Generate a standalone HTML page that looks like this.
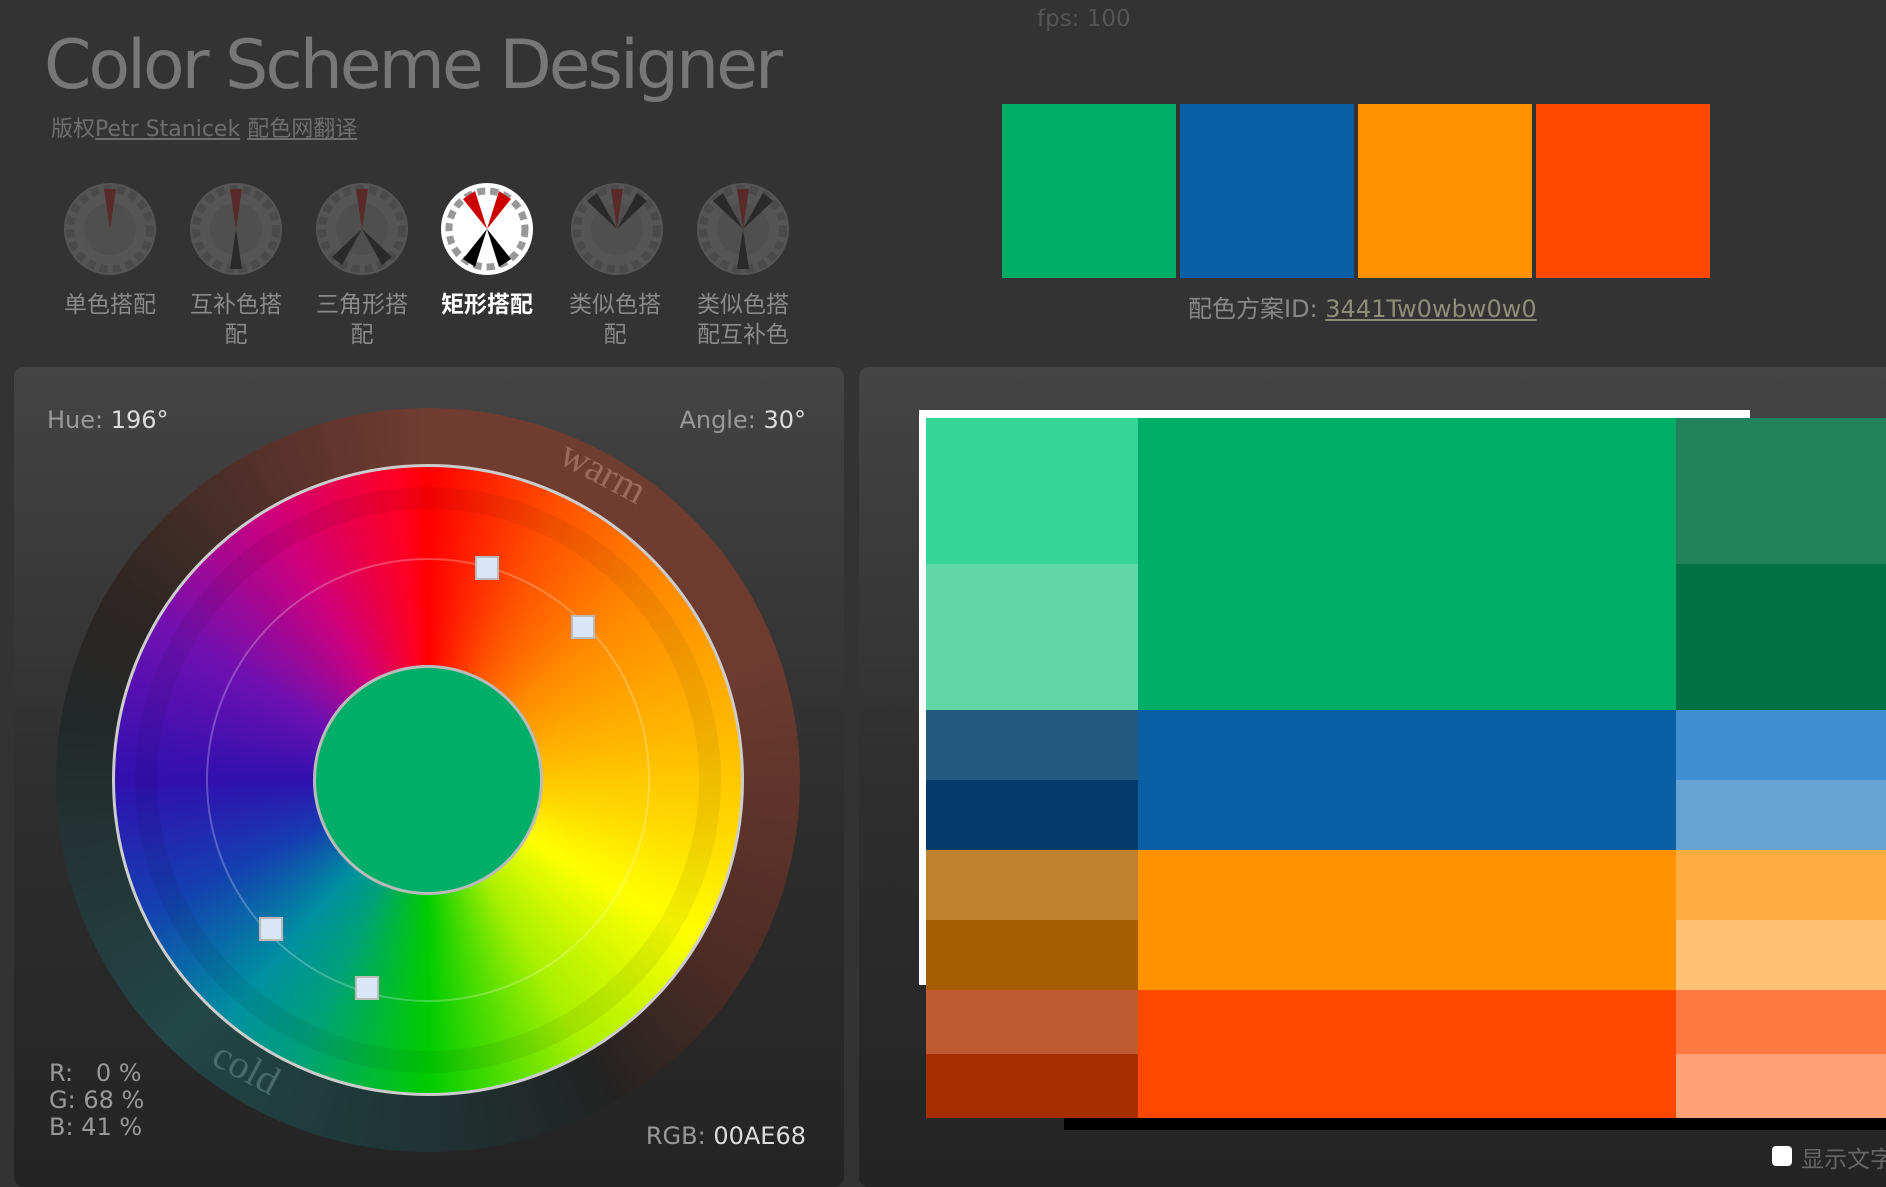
<!DOCTYPE html>
<html><head><meta charset="utf-8"><style>
*{margin:0;padding:0;box-sizing:border-box}
body{width:1886px;height:1172px;background:#333;overflow:hidden;position:relative;font-family:"DejaVu Sans","Noto Sans CJK SC",sans-serif;color:#888}
.a{position:absolute}
.title{left:44px;top:26px;font-family:"DejaVu Sans",sans-serif;font-size:68px;color:#777;letter-spacing:-3px;white-space:nowrap}
.sub{left:51px;top:111px;font-size:22px;color:#6e6e6e;white-space:nowrap}
.sub u{text-decoration:underline}
.lab{font-size:23px;color:#8a8a8a;text-align:center;width:120px;line-height:30px;font-family:"Noto Sans CJK SC",sans-serif}
.sw{top:104px;height:174px;width:174px}
.panel{top:367px;height:820px;border-radius:10px;background:linear-gradient(#444,#2d2d2d 55%,#242424)}
.c{position:absolute}
</style></head><body>
<div class="a title">Color Scheme Designer</div>
<div class="a sub">版权<u>Petr Stanicek</u> <u>配色网翻译</u></div>
<div class="a" style="left:1037px;top:6px;font-size:23px;color:#555">fps: 100</div>

<svg class="a" style="left:0;top:170px" width="820" height="120">
<defs>
<g id="ic"><circle r="46" fill="#555"/><circle r="40" fill="none" stroke="#4a4a4a" stroke-width="8" stroke-dasharray="8 5"/><circle r="26" fill="#4f4f4f"/></g>
</defs>
<g transform="translate(110,59)"><use href="#ic"/><path d="M0 0 L-6 -40 L6 -40Z" fill="#5a2a2a"/></g>
<g transform="translate(236,59)"><use href="#ic"/><path d="M0 0 L-6 -40 L6 -40Z" fill="#5a2a2a"/><path d="M0 0 L-6 40 L6 40Z" fill="#2a2a2a"/></g>
<g transform="translate(362,59)"><use href="#ic"/><path d="M0 0 L-6 -40 L6 -40Z" fill="#5a2a2a"/><path d="M0 0 L-30 28 L-20 36Z" fill="#2a2a2a"/><path d="M0 0 L30 28 L20 36Z" fill="#2a2a2a"/></g>
<g transform="translate(487,59)"><circle r="46" fill="#fff"/><circle r="38" fill="none" stroke="#999" stroke-width="7" stroke-dasharray="8 5"/><path d="M0 0 L-24 -30 L-12 -38Z" fill="#c00"/><path d="M0 0 L24 -30 L12 -38Z" fill="#c00"/><path d="M0 0 L-24 30 L-12 38Z" fill="#000"/><path d="M0 0 L24 30 L12 38Z" fill="#000"/></g>
<g transform="translate(617,59)"><use href="#ic"/><path d="M0 0 L-6 -40 L6 -40Z" fill="#5a2a2a"/><path d="M0 0 L-30 -28 L-20 -36Z" fill="#2a2a2a"/><path d="M0 0 L30 -28 L20 -36Z" fill="#2a2a2a"/></g>
<g transform="translate(743,59)"><use href="#ic"/><path d="M0 0 L-6 -40 L6 -40Z" fill="#5a2a2a"/><path d="M0 0 L-30 -28 L-20 -36Z" fill="#2a2a2a"/><path d="M0 0 L30 -28 L20 -36Z" fill="#2a2a2a"/><path d="M0 0 L-6 40 L6 40Z" fill="#2a2a2a"/></g>
</svg>
<div class="a lab" style="left:50px;top:287px">单色搭配</div>
<div class="a lab" style="left:176px;top:287px">互补色搭<br>配</div>
<div class="a lab" style="left:302px;top:287px">三角形搭<br>配</div>
<div class="a lab" style="left:427px;top:287px;color:#fff;font-weight:bold">矩形搭配</div>
<div class="a lab" style="left:555px;top:287px">类似色搭<br>配</div>
<div class="a lab" style="left:683px;top:287px">类似色搭<br>配互补色</div>

<div class="a sw" style="left:1002px;background:#00AE68"></div>
<div class="a sw" style="left:1180px;background:#0B5FA5"></div>
<div class="a sw" style="left:1358px;background:#FF9200"></div>
<div class="a sw" style="left:1536px;background:#FF4900"></div>
<div class="a" style="left:1188px;top:289px;font-size:24px;color:#888;white-space:nowrap">配色方案ID: <u style="color:#8d8d78">3441Tw0wbw0w0</u></div>

<div class="a panel" style="left:14px;width:830px"></div>
<div class="a" style="left:47px;top:406px;font-size:24px;color:#999">Hue: <span style="color:#ddd">196°</span></div>
<div class="a" style="right:1080px;top:406px;font-size:24px;color:#999;white-space:nowrap">Angle: <span style="color:#ddd">30°</span></div>
<div class="c" style="left:56px;top:408px;width:744px;height:744px;border-radius:50%;background:conic-gradient(#703c30 0deg,#6e3b2f 70deg,#4a2b24 125deg,#232323 150deg,#1f3a3a 195deg,#234646 225deg,#232828 280deg,#2c2624 300deg,#52302a 330deg,#703c30 360deg)"></div>
<div class="c" style="left:112px;top:464px;width:632px;height:632px;border-radius:50%;border:3px solid #ccc;background:conic-gradient(#ff0000 0deg,#ff5000 25deg,#ff8a00 50deg,#ffb000 75deg,#ffd800 100deg,#ffff00 120deg,#a8f000 150deg,#00cc00 180deg,#00a07a 205deg,#0090a0 220deg,#1440b0 245deg,#3010b0 270deg,#7010b0 300deg,#d0007a 330deg,#ff0020 355deg,#ff0000 360deg)"></div>
<div class="c" style="left:135px;top:487px;width:586px;height:586px;border-radius:50%;border:22px solid rgba(0,0,0,.06)"></div>
<div class="c" style="left:206px;top:558px;width:444px;height:444px;border-radius:50%;border:2px solid rgba(255,255,255,.25)"></div>
<div class="c" style="left:313px;top:665px;width:230px;height:230px;border-radius:50%;background:#00AE68;border:3px solid #bbb"></div>
<div class="c" style="left:475px;top:556px;width:24px;height:24px;border:2px solid #bbb;background:#d8e6f8"></div>
<div class="c" style="left:571px;top:615px;width:24px;height:24px;border:2px solid #bbb;background:#d8e6f8"></div>
<div class="c" style="left:259px;top:917px;width:24px;height:24px;border:2px solid #bbb;background:#d8e6f8"></div>
<div class="c" style="left:355px;top:976px;width:24px;height:24px;border:2px solid #bbb;background:#d8e6f8"></div>
<div class="c" style="left:558px;top:448px;font-family:'Liberation Serif',serif;font-size:40px;color:#9a6a5a;transform:rotate(28deg)">warm</div>
<div class="c" style="left:212px;top:1044px;font-family:'Liberation Serif',serif;font-size:40px;color:#4a6a6a;transform:rotate(28deg)">cold</div>
<div class="c" style="left:49px;top:1060px;font-size:24px;color:#999;line-height:27px;white-space:pre">R:   0 %
G: 68 %
B: 41 %</div>
<div class="c" style="right:1080px;top:1122px;font-size:24px;color:#999;white-space:nowrap">RGB: <span style="color:#ddd">00AE68</span></div>

<div class="a panel" style="left:859px;width:1040px"></div>
<div class="c" style="left:919px;top:410px;width:831px;height:575px;background:#fff"></div>
<div class="c" style="left:1064px;top:1118px;width:822px;height:12px;background:#000"></div>
<div class="c" style="left:926px;top:418px;width:960px;height:700px">
<div class="c" style="left:0;top:0;width:212px;height:146px;background:#34D597"></div>
<div class="c" style="left:0;top:146px;width:212px;height:146px;background:#60D6A7"></div>
<div class="c" style="left:0;top:292px;width:212px;height:70px;background:#245A7F"></div>
<div class="c" style="left:0;top:362px;width:212px;height:70px;background:#053B6B"></div>
<div class="c" style="left:0;top:432px;width:212px;height:70px;background:#BF8330"></div>
<div class="c" style="left:0;top:502px;width:212px;height:70px;background:#A65F00"></div>
<div class="c" style="left:0;top:572px;width:212px;height:64px;background:#BF5B30"></div>
<div class="c" style="left:0;top:636px;width:212px;height:64px;background:#A62F00"></div>
<div class="c" style="left:212px;top:0;width:538px;height:292px;background:#00AE68"></div>
<div class="c" style="left:212px;top:292px;width:538px;height:140px;background:#0B5FA5"></div>
<div class="c" style="left:212px;top:432px;width:538px;height:140px;background:#FF9200"></div>
<div class="c" style="left:212px;top:572px;width:538px;height:128px;background:#FF4900"></div>
<div class="c" style="left:750px;top:0;width:210px;height:146px;background:#21825B"></div>
<div class="c" style="left:750px;top:146px;width:210px;height:146px;background:#007143"></div>
<div class="c" style="left:750px;top:292px;width:210px;height:70px;background:#3F8ED2"></div>
<div class="c" style="left:750px;top:362px;width:210px;height:70px;background:#68A2D2"></div>
<div class="c" style="left:750px;top:432px;width:210px;height:70px;background:#FFAD40"></div>
<div class="c" style="left:750px;top:502px;width:210px;height:70px;background:#FFC373"></div>
<div class="c" style="left:750px;top:572px;width:210px;height:64px;background:#FF7A43"></div>
<div class="c" style="left:750px;top:636px;width:210px;height:64px;background:#FFA077"></div>
</div>
<div class="c" style="left:1772px;top:1146px;width:20px;height:20px;border-radius:4px;background:#fff"></div>
<div class="c" style="left:1801px;top:1140px;font-size:23px;color:#666;white-space:nowrap;font-family:'Noto Sans CJK SC',sans-serif">显示文字</div>
</body></html>
